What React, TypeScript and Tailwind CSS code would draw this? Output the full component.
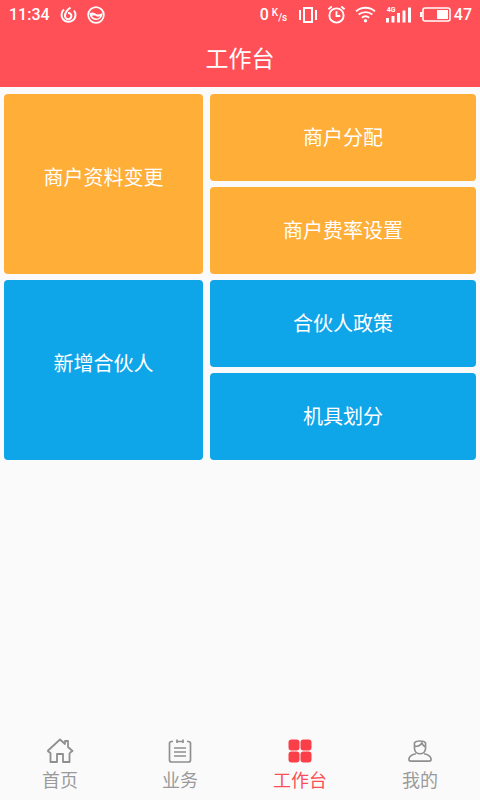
const font = "font-['Roboto','Noto_Sans_CJK_SC',sans-serif]";

function Tile({ label, color, tall }: { label: string; color: string; tall?: boolean }) {
  return (
    <div className={`flex items-center justify-center rounded-[4px] text-[20px] font-normal text-white ${color} ${tall ? "h-[180px] w-[199px] pb-[13px]" : "h-[87px] w-[266px] pt-[1px]"}`}>
      {label}
    </div>
  );
}

function Group({ a, b, c, color }: { a: string; b: string; c: string; color: string }) {
  return (
    <div className="flex gap-[7px]">
      <Tile label={a} color={color} tall />
      <div className="flex flex-col gap-[6px]">
        <Tile label={b} color={color} />
        <Tile label={c} color={color} />
      </div>
    </div>
  );
}

function StatusBar() {
  return (
    <div className="flex h-[29px] items-center justify-between pl-[9px] pr-[8px] text-white">
      <div className="flex items-center">
        <span className="text-[16px] font-medium leading-none">11:34</span>
        <svg viewBox="0 0 18 18" className="ml-[9px] h-[18px] w-[18px]" fill="none" stroke="white" strokeWidth="2">
          <path d="M5 3.5 A7 7 0 1 0 15 4.5" />
          <path d="M11.5 1.5 C8 4 6 7 6 10 a3.2 3.2 0 1 0 6.4 0 a3 3 0 0 0 -3.4 -3" />
        </svg>
        <svg viewBox="0 0 18 18" className="ml-[10px] h-[18px] w-[18px]">
          <circle cx="9" cy="9" r="7.8" fill="none" stroke="white" strokeWidth="1.8" />
          <path d="M2.500 7.500 C5 5.500 8 7 9 8 C11 9 13.500 8 15.500 7 C15.500 11 13 14 9 14 C5 14 3 11 2.500 7.500 Z" fill="white" />
          <path d="M5 10 C7 9 9 10 10 10.500 C11.500 11 12 10.500 13 10 C12.500 12 11 12.500 9.500 12.500 C7.500 12.500 6 11.500 5 10 Z" fill="#ff4f57" />
        </svg>
      </div>
      <div className="flex items-center">
        <span className="text-[16px] font-medium leading-none">0</span>
        <span className="ml-[3px] flex h-[16px] w-[17px] items-start text-[10px] font-medium leading-[11px]">
          K<span className="mt-[5px]">/s</span>
        </span>
        <svg viewBox="0 0 18 16" className="ml-[10px] h-[16px] w-[18px]" fill="none" stroke="white" strokeWidth="2">
          <rect x="5" y="1" width="8" height="14" />
          <path d="M1 3 V13 M17 3 V13" />
        </svg>
        <svg viewBox="0 0 20 20" className="ml-[10px] h-[19px] w-[19px]" fill="none" stroke="white" strokeWidth="2">
          <circle cx="10" cy="11" r="7.500" />
          <path d="M10 6.500 V11.500 H14" />
          <path d="M1.500 4.500 L5 1.500 M18.500 4.500 L15 1.500" />
        </svg>
        <svg viewBox="0 0 20 16" className="ml-[9px] h-[17px] w-[21px]" fill="none" stroke="white" strokeWidth="1.800">
          <path d="M1 5 C6 0.500 14 0.500 19 5" />
          <path d="M3.500 8 C7 5 13 5 16.500 8" />
          <path d="M6.500 11 C8.500 9.500 11.500 9.500 13.500 11" />
          <circle cx="10" cy="14" r="1.600" fill="white" stroke="none" />
        </svg>
        <div className="relative ml-[10px] h-[16px] w-[25px]">
          <span className="absolute left-[1px] top-[-1px] text-[7px] font-bold leading-[8px]">4G</span>
          <svg viewBox="0 0 25 16" className="h-[16px] w-[25px]" fill="white">
            <rect x="0" y="11" width="3" height="4.500" />
            <rect x="5.500" y="9" width="3" height="6.500" />
            <rect x="11" y="6" width="3" height="9.500" />
            <rect x="16.500" y="3.500" width="3" height="12" />
            <rect x="22" y="0.500" width="3" height="15" />
          </svg>
        </div>
        <svg viewBox="0 0 31 15" className="ml-[9px] h-[15px] w-[31px]">
          <rect x="3" y="1" width="27" height="13" rx="2" fill="none" stroke="white" strokeWidth="1.600" />
          <rect x="0" y="5" width="2" height="5" fill="white" />
          <rect x="17" y="3" width="11" height="9" fill="white" />
        </svg>
        <span className="ml-[3px] text-[16px] font-medium leading-none">47</span>
      </div>
    </div>
  );
}

function NavItem({ label, active, children }: { label: string; active?: boolean; children: React.ReactNode }) {
  return (
    <div className="flex flex-1 flex-col items-center">
      <div className="flex h-[26px] items-center justify-center">{children}</div>
      <span className={`mt-[4px] text-[18px] font-normal leading-[26px] ${active ? "text-[#fb4f57]" : "text-[#9a9a9a]"}`}>{label}</span>
    </div>
  );
}

export default function App() {
  return (
    <div className={`flex h-[800px] w-[480px] flex-col overflow-hidden bg-[#fafafa] ${font}`}>
      <div className="h-[87px] bg-[#ff4f57]">
        <StatusBar />
        <div className="flex h-[58px] items-center justify-center pt-[5px] text-[23px] font-normal text-white">工作台</div>
      </div>
      <div className="mt-[7px] flex flex-col gap-[6px] pl-[4px]">
        <Group a="商户资料变更" b="商户分配" c="商户费率设置" color="bg-[#ffae38]" />
        <Group a="新增合伙人" b="合伙人政策" c="机具划分" color="bg-[#0fa5e9]" />
      </div>
      <div className="mt-auto flex h-[62px] pb-[2px]">
        <NavItem label="首页">
          <svg viewBox="0 0 28 26" className="h-[26px] w-[28px]" fill="none" stroke="#8f8f8f" strokeWidth="1.800" strokeLinejoin="round">
            <path d="M1.500 13 L14 1.500 L19 6 V3 H22 V9 L26.500 13 L23.500 15" />
            <path d="M1.500 13 L4.500 15 V24 H11 V16 H17 V24 H23.500 V15" />
          </svg>
        </NavItem>
        <NavItem label="业务">
          <svg viewBox="0 0 24 24" className="h-[24px] w-[24px]" fill="none" stroke="#8f8f8f" strokeWidth="1.700">
            <path d="M5 2.500 H3.500 Q1.500 2.500 1.500 4.500 V21 Q1.500 23 3.500 23 H20.500 Q22.500 23 22.500 21 V4.500 Q22.500 2.500 20.500 2.500 H19" />
            <path d="M9 2.500 H15 M9 0.500 V4 M15 0.500 V4 M6 9 H18 M6 13 H18 M6 17 H18" />
          </svg>
        </NavItem>
        <NavItem label="工作台" active>
          <svg viewBox="0 0 24 24" className="h-[24px] w-[24px]" fill="#fb3f49">
            <rect x="0.500" y="0.500" width="11" height="11" rx="3" />
            <rect x="12.500" y="0.500" width="11" height="11" rx="3" />
            <rect x="0.500" y="12.500" width="11" height="11" rx="3" />
            <rect x="12.500" y="12.500" width="11" height="11" rx="3" />
          </svg>
        </NavItem>
        <NavItem label="我的">
          <svg viewBox="0 0 26 24" className="h-[24px] w-[24px]" fill="none" stroke="#8f8f8f" strokeWidth="1.800" strokeLinejoin="round">
            <path d="M7 3 C9 0.500 17 0.500 19 3 V9 C19 13 16 15 13 15 C10 15 7 13 7 9 Z" />
            <path d="M7 7 C11 7 14 6 15 3 C16 6 17 7 19 7" />
            <path d="M8.500 15 C4 16 1 18 1 21 Q1 23 3 23 H23 Q25 23 25 21 C25 18 22 16 17.500 15" />
          </svg>
        </NavItem>
      </div>
    </div>
  );
}
